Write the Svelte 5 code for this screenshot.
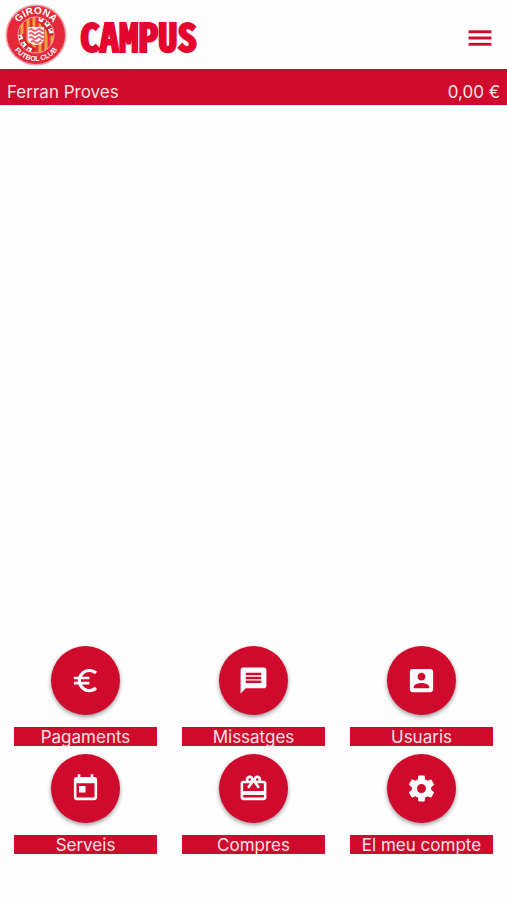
<script lang="ts">
  const user = { name: "Ferran Proves", balance: "0,00 €" };

  const sections = [
    {
      label: "Pagaments",
      icon: "M15 18.5c-2.51 0-4.68-1.42-5.76-3.5H15v-2H8.58c-.05-.33-.08-.66-.08-1s.03-.67.08-1H15V9H9.24C10.32 6.92 12.5 5.5 15 5.5c1.61 0 3.09.59 4.23 1.57L21 5.3C19.41 3.87 17.3 3 15 3c-3.92 0-7.24 2.51-8.48 6H3v2h3.06c-.04.33-.06.66-.06 1s.02.67.06 1H3v2h3.52c1.24 3.49 4.56 6 8.48 6 2.31 0 4.41-.87 6-2.3l-1.78-1.77c-1.13.98-2.6 1.57-4.22 1.57z",
    },
    {
      label: "Missatges",
      icon: "M20 2H4c-1.1 0-1.99.9-1.99 2L2 22l4-4h14c1.1 0 2-.9 2-2V4c0-1.1-.9-2-2-2zM18 14H6v-2h12v2zm0-3H6V9h12v2zm0-3H6V6h12v2z",
    },
    {
      label: "Usuaris",
      icon: "M3 5v14c0 1.1.89 2 2 2h14c1.1 0 2-.9 2-2V5c0-1.1-.9-2-2-2H5c-1.11 0-2 .9-2 2zm12 4c0 1.66-1.34 3-3 3s-3-1.34-3-3 1.34-3 3-3 3 1.34 3 3zm-9 8c0-2 4-3.1 6-3.1s6 1.1 6 3.1v1H6v-1z",
    },
    {
      label: "Serveis",
      icon: "M19 3h-1V1h-2v2H8V1H6v2H5c-1.11 0-1.99.9-1.99 2L3 19c0 1.1.89 2 2 2h14c1.1 0 2-.9 2-2V5c0-1.1-.9-2-2-2zm0 16H5V8h14v11zM7 10h5v5H7z",
    },
    {
      label: "Compres",
      icon: "M20 6h-2.18c.11-.31.18-.65.18-1 0-1.66-1.34-3-3-3-1.05 0-1.96.54-2.5 1.35l-.5.67-.5-.68C10.96 2.54 10.05 2 9 2 7.34 2 6 3.34 6 5c0 .35.07.69.18 1H4c-1.11 0-1.99.89-1.99 2L2 19c0 1.11.89 2 2 2h16c1.11 0 2-.89 2-2V8c0-1.11-.89-2-2-2zm-5-2c.55 0 1 .45 1 1s-.45 1-1 1-1-.45-1-1 .45-1 1-1zM9 4c.55 0 1 .45 1 1s-.45 1-1 1-1-.45-1-1 .45-1 1-1zm11 15H4v-2h16v2zm0-5H4V8h5.08L7 10.83 8.62 12 11 8.76l1-1.36 1 1.36L15.38 12 17 10.83 14.92 8H20v6z",
    },
    {
      label: "El meu compte",
      icon: "M19.43 12.98c.04-.32.07-.64.07-.98s-.03-.66-.07-.98l2.11-1.65c.19-.15.24-.42.12-.64l-2-3.46c-.12-.22-.39-.3-.61-.22l-2.49 1c-.52-.4-1.08-.73-1.69-.98l-.38-2.65C14.46 2.18 14.25 2 14 2h-4c-.25 0-.46.18-.49.42l-.38 2.65c-.61.25-1.17.59-1.69.98l-2.49-1c-.23-.09-.49 0-.61.22l-2 3.46c-.13.22-.07.49.12.64l2.11 1.65c-.04.32-.07.65-.07.98s.03.66.07.98l-2.11 1.65c-.19.15-.24.42-.12.64l2 3.46c.12.22.39.3.61.22l2.49-1c.52.4 1.08.73 1.69.98l.38 2.65c.03.24.24.42.49.42h4c.25 0 .46-.18.49-.42l.38-2.65c.61-.25 1.17-.59 1.69-.98l2.49 1c.23.09.49 0 .61-.22l2-3.46c.12-.22.07-.49-.12-.64l-2.11-1.65zM12 15.5c-1.93 0-3.5-1.57-3.5-3.5s1.57-3.5 3.5-3.5 3.5 1.57 3.5 3.5-1.57 3.5-3.5 3.5z",
    },
  ];
</script>

<div class="app">
  <header class="topbar">
    <a class="brand" href="#home">
      <svg class="crest" viewBox="0 0 62 62" aria-hidden="true">
        <defs>
          <path id="arc-top" d="M10 31a21 21 0 0 1 42 0" />
          <path id="arc-bottom" d="M5 31a26 26 0 0 0 52 0" />
          <clipPath id="inner"><circle cx="31" cy="31" r="18" /></clipPath>
        </defs>
        <circle cx="31" cy="31" r="30.5" fill="#f0a3a7" />
        <circle cx="31" cy="31" r="29" fill="#e5283a" />
        <g clip-path="url(#inner)">
          <rect x="12" y="12" width="38" height="38" fill="#e5303a" />
          <path
            d="M17 12v38M23 12v38M29 12v38M35 12v38M41 12v38M47 12v38"
            stroke="#f3a33c"
            stroke-width="3"
          />
          <!-- sashes on both sides of the shield -->
          <path
            d="M33 11c9 3 15 9 17 20M12 31c2 11 8 17 17 20"
            fill="none"
            stroke="#d9202e"
            stroke-width="14"
          />
          <path
            d="M34 14c7 2 12 8 14 17M14 31c2 9 7 15 14 17"
            fill="none"
            stroke="#fff"
            stroke-width="6"
            stroke-dasharray="5 3"
          />
          <path
            d="M34 14c7 2 12 8 14 17M14 31c2 9 7 15 14 17"
            fill="none"
            stroke="#e5303a"
            stroke-width="2"
            stroke-dasharray="2 6"
            stroke-dashoffset="-1"
          />
        </g>
        <path d="M23 23h16v12q0 5-8 6-8-1-8-6z" fill="#fff" />
        <path
          d="M24 26q2-2 4 0t4 0 4 0 3 0M24 30q2-2 4 0t4 0 4 0 3 0M24 34q2-2 4 0t4 0 4 0 3 0M26 38q2-2 4 0t4 0 2 0"
          fill="none"
          stroke="#e76a77"
          stroke-width="2"
        />
        <circle cx="31" cy="31" r="18" fill="none" stroke="#f4a6a8" />
        <text class="crest-name">
          <textPath href="#arc-top" startOffset="50%">GIRONA</textPath>
        </text>
        <text class="crest-club">
          <textPath href="#arc-bottom" startOffset="50%">FUTBOL CLUB</textPath>
        </text>
      </svg>
      <span class="brand-name">CAMPUS</span>
    </a>
    <button class="menu" aria-label="Menú">
      <svg viewBox="0 0 24 24" aria-hidden="true">
        <path d="M3 18h18v-2H3v2zm0-5h18v-2H3v2zm0-7v2h18V6H3z" />
      </svg>
    </button>
  </header>

  <div class="account">
    <span>{user.name}</span>
    <span>{user.balance}</span>
  </div>

  <main></main>

  <nav class="sections">
    {#each sections as section}
      <button class="section">
        <span class="circle">
          <svg viewBox="0 0 24 24" aria-hidden="true">
            <path d={section.icon} />
          </svg>
        </span>
        <span class="label">{section.label}</span>
      </button>
    {/each}
  </nav>
</div>

<style>
  :global(body) {
    margin: 0;
    background-color: #fefefe;
  }

  .app {
    min-height: 100vh;
    display: flex;
    flex-direction: column;
    font-family: Inter, Roboto, sans-serif;
    font-size: 17px;
  }

  .topbar {
    display: flex;
    align-items: center;
    justify-content: space-between;
    padding: 4px 12px 3px 5px;
  }

  .brand {
    display: flex;
    align-items: center;
    gap: 13px;
    text-decoration: none;
  }

  .crest {
    display: block;
    width: 62px;
    height: 62px;
  }

  .crest text {
    fill: #fff;
    font-family: "Liberation Sans", Arial, sans-serif;
    font-weight: bold;
    text-anchor: middle;
  }

  .crest .crest-name {
    font-size: 10px;
  }

  .crest .crest-club {
    font-size: 7px;
  }

  .brand-name {
    color: #e4062e;
    font-family: "Noto Sans Mono CJK SC", "Noto Sans CJK SC", sans-serif;
    font-size: 39px;
    font-weight: bold;
    line-height: 40px;
    -webkit-text-stroke: 2px #e4062e;
  }

  .menu {
    border: 0;
    padding: 5px 0 0;
    background: none;
    cursor: pointer;
  }

  .menu svg {
    display: block;
    width: 30px;
    height: 30px;
    fill: #cf0a2c;
    stroke: #cf0a2c;
    stroke-width: 0.3;
  }

  .account {
    display: flex;
    justify-content: space-between;
    padding: 13px 7px 3px;
    background-color: #cf0a2c;
    color: #fbe3e6;
    line-height: 20px;
  }

  main {
    flex: 1;
  }

  .sections {
    display: grid;
    grid-template-columns: repeat(3, 1fr);
    gap: 8px 25px;
    padding: 0 14px 46px;
  }

  .section {
    display: flex;
    flex-direction: column;
    align-items: center;
    gap: 12px;
    border: 0;
    padding: 0;
    background: none;
    font: inherit;
    cursor: pointer;
  }

  .circle {
    display: flex;
    align-items: center;
    justify-content: center;
    width: 69px;
    height: 69px;
    border-radius: 50%;
    background-color: #cf0a2c;
    box-shadow: 0 2px 4px rgba(0, 0, 0, 0.4);
  }

  .circle svg {
    width: 31px;
    height: 31px;
    fill: #fff;
  }

  .label {
    width: 100%;
    padding-top: 1px;
    background-color: #cf0a2c;
    color: #fbe3e6;
    line-height: 18px;
    text-align: center;
  }
</style>
